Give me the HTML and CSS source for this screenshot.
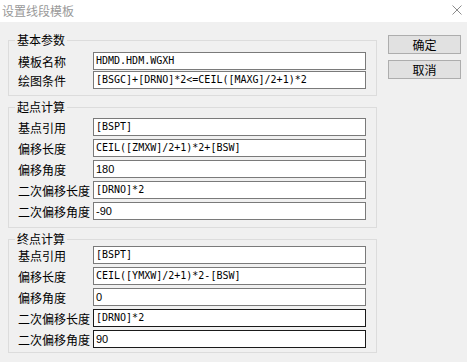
FILE: index.html
```html
<!DOCTYPE html>
<html lang="zh-CN">
<head>
    <meta charset="UTF-8">
    <title>设置线段模板</title>
    <link rel="stylesheet" href="styles.css">
</head>
<body>
    <div class="titlebar">
        <span class="title">设置线段模板</span>
        <svg class="close" width="10" height="10" viewBox="0 0 10 10">
            <path d="M0.5 0.5 L9.5 9.5 M9.5 0.5 L0.5 9.5" stroke="#8c8c8c" stroke-width="1" fill="none"/>
        </svg>
    </div>

    <div class="dialog">
        <div class="groups">
            <fieldset class="group group-basic">
                <legend>基本参数</legend>
                <div class="rows rows-tight">
                    <label>模板名称</label>
                    <div class="field mono">HDMD.HDM.WGXH</div>
                    <label>绘图条件</label>
                    <div class="field mono">[BSGC]+[DRNO]*2&lt;=CEIL([MAXG]/2+1)*2</div>
                </div>
            </fieldset>

            <fieldset class="group group-start">
                <legend>起点计算</legend>
                <div class="rows">
                    <label>基点引用</label>
                    <div class="field mono">[BSPT]</div>
                    <label>偏移长度</label>
                    <div class="field mono">CEIL([ZMXW]/2+1)*2+[BSW]</div>
                    <label>偏移角度</label>
                    <div class="field num">180</div>
                    <label>二次偏移长度</label>
                    <div class="field mono">[DRNO]*2</div>
                    <label>二次偏移角度</label>
                    <div class="field num">-90</div>
                </div>
            </fieldset>

            <fieldset class="group group-end">
                <legend>终点计算</legend>
                <div class="rows">
                    <label>基点引用</label>
                    <div class="field mono">[BSPT]</div>
                    <label>偏移长度</label>
                    <div class="field mono">CEIL([YMXW]/2+1)*2-[BSW]</div>
                    <label>偏移角度</label>
                    <div class="field num">0</div>
                    <label>二次偏移长度</label>
                    <div class="field mono dark">[DRNO]*2</div>
                    <label>二次偏移角度</label>
                    <div class="field num dark">90</div>
                </div>
            </fieldset>
        </div>

        <div class="actions">
            <button class="btn">确定</button>
            <button class="btn">取消</button>
        </div>
    </div>
</body>
</html>
```

FILE: styles.css
```css
body {
    margin: 0;
    background-color: #f0f0f0;
    font-family: "Noto Sans CJK SC", "Liberation Sans", sans-serif;
    font-size: 12px;
    color: #000;
}
.titlebar {
    height: 22px;
    background-color: #fff;
    display: flex;
    align-items: center;
    justify-content: space-between;
    padding: 0 5px 0 2px;
}
.title {
    color: #999;
    line-height: 14px;
}
.close {
    display: block;
    margin-top: -2px;
}
.dialog {
    display: flex;
    padding-left: 8px;
}
.groups {
    width: 369px;
}
.group {
    margin: 4px 0 0 0;
    border: 1px solid #dcdcdc;
    padding: 4px 10px 7px 9px;
    min-width: 0;
}
.group legend {
    padding: 0 2px;
    margin-left: -3px;
    line-height: 14px;
}
.group-basic {
    margin-top: 11px;
    padding-top: 5px;
    padding-bottom: 6px;
}
.group-end {
    padding-top: 0;
    padding-bottom: 4px;
}
.rows {
    display: grid;
    grid-template-columns: 75px 273px;
    grid-auto-rows: 18px;
    row-gap: 3px;
}
.rows-tight {
    row-gap: 1px;
}
.rows label {
    line-height: 18px;
    padding-top: 1px;
    white-space: nowrap;
}
.field {
    box-sizing: border-box;
    height: 18px;
    background-color: #fff;
    border: 1px solid #7a7a7a;
    padding: 0 2px;
    line-height: 16px;
    white-space: nowrap;
    overflow: hidden;
}
.field.dark {
    border-color: #1a1a1a;
}
.mono {
    font-family: "DejaVu Sans Mono", monospace;
    font-size: 10px;
}
.num {
    font-family: "Liberation Sans", Arial, sans-serif;
    font-size: 11px;
}
.actions {
    display: flex;
    flex-direction: column;
    gap: 6px;
    margin-left: 11px;
    padding-top: 13px;
}
.btn {
    width: 73px;
    height: 19px;
    padding: 0;
    background-color: #e1e1e1;
    border: 1px solid #adadad;
    font-family: "Noto Sans CJK SC", sans-serif;
    font-size: 12px;
    line-height: 16px;
    color: #000;
}
```
